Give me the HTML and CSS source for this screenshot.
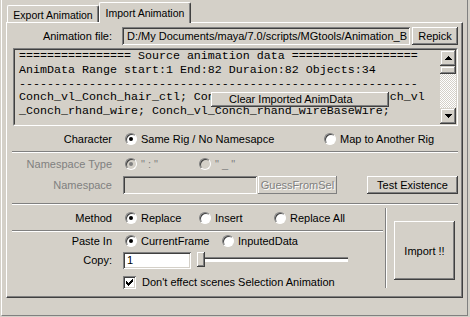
FILE: index.html
```html
<!DOCTYPE html>
<html>
<head>
<meta charset="utf-8">
<link rel="stylesheet" href="styles.css">
</head>
<body>
<div class="frame">
  <div class="tabs">
    <div class="tab">Export Animation</div>
    <div class="tab active">Import Animation</div>
  </div>
  <div class="pane">
    <div class="row r-file">
      <span class="lbl">Animation file:</span>
      <div class="field ro">D:/My Documents/maya/7.0/scripts/MGtools/Animation_B</div>
      <button class="btn repick">Repick</button>
    </div>

    <div class="tarea">
      <div class="tarea-in">
        <div class="tbody">================ Source animation data ==================
AnimData Range start:1 End:82 Duraion:82 Objects:34
---------------------------------------------------------
Conch_vl_Conch_hair_ctl; Conch_vl_Conch_head_ctl; Conch_vl
_Conch_rhand_wire; Conch_vl_Conch_rhand_wireBaseWire;</div>
        <div class="vscroll">
          <div class="sbtn"><svg width="7" height="4" viewBox="0 0 7 4"><path d="M3 0h1v1h1v1h1v1h1v1H0V3h1V2h1V1h1z" fill="#000"/></svg></div>
          <div class="sthumb"></div>
          <div class="strack"></div>
          <div class="sbtn"><svg width="7" height="4" viewBox="0 0 7 4"><path d="M0 0h7v1H6v1H5v1H4v1H3V3H2V2H1V1H0z" fill="#000"/></svg></div>
        </div>
      </div>
      <div class="popup">Clear Imported AnimData</div>
    </div>

    <div class="row r-char">
      <span class="lbl">Character</span>
      <div class="opts">
        <label class="opt w-char"><span class="radio on"></span>Same Rig / No Namesapce</label>
        <label class="opt"><span class="radio"></span>Map to Another Rig</label>
      </div>
    </div>

    <div class="sep"></div>

    <div class="row r-nstype dis">
      <span class="lbl">Namespace Type</span>
      <div class="opts">
        <label class="opt w-ns"><span class="radio on off"></span>&quot; : &quot;</label>
        <label class="opt"><span class="radio off"></span>&quot; _ &quot;</label>
      </div>
    </div>

    <div class="row r-ns">
      <span class="lbl dis">Namespace</span>
      <div class="field ns-field"></div>
      <button class="btn guess">GuessFromSel</button>
      <button class="btn test">Test Existence</button>
    </div>

    <div class="sep"></div>

    <div class="bottom">
      <div class="left">
        <div class="row r-method">
          <span class="lbl">Method</span>
          <div class="opts">
            <label class="opt w-m1"><span class="radio on"></span>Replace</label>
            <label class="opt w-m2"><span class="radio"></span>Insert</label>
            <label class="opt"><span class="radio"></span>Replace All</label>
          </div>
        </div>
        <div class="sep"></div>
        <div class="row r-paste">
          <span class="lbl">Paste In</span>
          <div class="opts">
            <label class="opt w-p1"><span class="radio on"></span>CurrentFrame</label>
            <label class="opt"><span class="radio"></span>InputedData</label>
          </div>
        </div>
        <div class="row r-copy">
          <span class="lbl">Copy:</span>
          <div class="field white copy-field">1</div>
          <div class="slider">
            <div class="groove"></div>
            <div class="knob"></div>
          </div>
        </div>
        <div class="row r-check">
          <span class="check"><svg width="7" height="7" viewBox="0 0 7 7"><path d="M6 0h1v3H6v1H5v1H4v1H3v1H2V6H1V5H0V2h1v1h1v1h1V3h1V2h1V1h1z" fill="#000"/></svg></span>
          <span>Don't effect scenes Selection Animation</span>
        </div>
      </div>
      <div class="vsep"></div>
      <button class="btn import">Import !!</button>
    </div>
  </div>
</div>
</body>
</html>
```

FILE: styles.css
```css
* { box-sizing: border-box; }
html, body { margin: 0; padding: 0; }
body {
  width: 470px;
  height: 317px;
  overflow: hidden;
  background: #d4d0c8;
  font-family: "Liberation Sans", Arial, sans-serif;
  font-size: 11px;
  color: #000;
}

.frame {
  margin-left: 1px;
  width: 467px;
  height: 316px;
  border-left: 1px solid #fff;
  border-right: 1px solid #808080;
  border-bottom: 1px solid #808080;
  padding: 0 4px;
}

/* tabs */
.tabs {
  display: flex;
  height: 22px;
  padding-left: 1px;
  align-items: flex-start;
}
.tab {
  width: 92px;
  height: 17px;
  margin-top: 5px;
  border-top: 1px solid #fff;
  border-left: 1px solid #fff;
  border-right: 1px solid #404040;
  border-radius: 2px 2px 0 0;
  box-shadow: inset -1px 0 #808080;
  display: flex;
  align-items: center;
  justify-content: center;
  padding-top: 1px;
  font-size: 10.5px;
}
.tab.active {
  height: 21px;
  margin-top: 2px;
  position: relative;
  z-index: 1;
  background: #d4d0c8;
  padding-top: 0;
  padding-bottom: 1px;
}

/* pane */
.pane {
  width: 457px;
  height: 276px;
  border-top: 1px solid #fff;
  border-left: 1px solid #fff;
  border-right: 1px solid #404040;
  border-bottom: 1px solid #404040;
  box-shadow: inset -1px -1px #808080;
  padding: 4px 4px 2px 5px;
}

.row {
  display: flex;
  align-items: center;
}
.lbl {
  flex: none;
  width: 100px;
  margin-right: 10px;
  text-align: right;
  white-space: nowrap;
}
.dis, .dis .lbl { color: #808080; }

/* fields & buttons */
.field {
  height: 18px;
  line-height: 18px;
  padding-left: 5px;
  white-space: nowrap;
  overflow: hidden;
  background: #d4d0c8;
  box-shadow: inset 1px 1px #808080, inset -1px -1px #fff, inset 2px 2px #404040, inset -2px -2px #d4d0c8;
}
.field.white { background: #fff; }
.btn {
  display: flex;
  align-items: center;
  justify-content: center;
  padding: 0;
  margin: 0;
  border: none;
  background: #d4d0c8;
  font-family: "Liberation Sans", Arial, sans-serif;
  font-size: 11px;
  color: #000;
  box-shadow: inset -1px -1px #404040, inset 1px 1px #fff, inset -2px -2px #808080, inset 2px 2px #d4d0c8;
}

.r-file { height: 18px; }
.r-file .field { width: 288px; }
.repick { width: 46px; height: 18px; margin-left: 2px; }

/* text area */
.tarea {
  position: relative;
  margin: 3px 0 0 1px;
  width: 445px;
  height: 78px;
  border: 1px solid;
  border-color: #808080 #fff #fff #808080;
}
.tarea-in {
  display: flex;
  height: 100%;
  border: 1px solid;
  border-color: #404040 #d4d0c8 #d4d0c8 #404040;
}
.tbody {
  flex: 1;
  overflow: hidden;
  padding-left: 4px;
  font-family: "Liberation Mono", "Courier New", monospace;
  font-size: 11.666px;
  line-height: 13.75px;
  white-space: pre;
}
.vscroll {
  flex: none;
  width: 16px;
  display: flex;
  flex-direction: column;
}
.sbtn {
  height: 16px;
  display: flex;
  align-items: center;
  justify-content: center;
  background: #d4d0c8;
  box-shadow: inset -1px -1px #404040, inset 1px 1px #d4d0c8, inset -2px -2px #808080, inset 2px 2px #fff;
}
.sbtn svg { display: block; }
.sthumb {
  height: 8px;
  background: #d4d0c8;
  box-shadow: inset -1px -1px #404040, inset 1px 1px #d4d0c8, inset -2px -2px #808080, inset 2px 2px #fff;
}
.strack {
  flex: 1;
  background: repeating-conic-gradient(#fff 0 25%, #d4d0c8 0 50%) 0 0 / 2px 2px;
}
.popup {
  position: absolute;
  left: 197px;
  top: 43px;
  width: 178px;
  height: 15px;
  padding-left: 18px;
  line-height: 15px;
  background: #d4d0c8;
  box-shadow: inset -1px -1px #404040, inset 1px 1px #fff, inset -2px -2px #808080;
  white-space: nowrap;
}

/* radios */
.opts { display: flex; margin-left: 3px; }
.opt {
  display: flex;
  align-items: center;
  gap: 4px;
  white-space: nowrap;
}
.w-char { width: 199px; }
.w-ns { width: 74px; }
.w-m1 { width: 74px; }
.w-m2 { width: 75px; }
.w-p1 { width: 97px; }
.radio {
  position: relative;
  flex: none;
  width: 12px;
  height: 12px;
  border-radius: 50%;
  border: 1px solid;
  border-color: #808080 #fff #fff #808080;
  background: #fff;
  box-shadow: inset 1px 1px #404040;
}
.radio.on::after {
  content: "";
  position: absolute;
  left: 3px;
  top: 3px;
  width: 4px;
  height: 4px;
  border-radius: 50%;
  background: #000;
}
.radio.off { background: #d4d0c8; }
.radio.off.on::after { background: #808080; }

.sep {
  height: 2px;
  border-top: 1px solid #808080;
  border-bottom: 1px solid #fff;
}

.r-char { height: 25px; }
.r-nstype { height: 22px; }
.r-ns { height: 20px; margin-bottom: 8px; }
.ns-field { width: 134px; margin-left: 1px; }
.guess {
  width: 79px;
  height: 18px;
  margin-left: 1px;
  color: #808080;
  text-shadow: 1px 1px #fff;
  box-shadow: inset -1px -1px #808080, inset 1px 1px #fff;
}
.test { width: 91px; height: 18px; margin-left: auto; }

/* bottom */
.bottom { display: flex; height: 90px; }
.left { width: 371px; flex: none; }
.r-method { height: 25px; }
.r-paste { height: 18px; }
.r-copy { height: 20px; }
.copy-field { width: 68px; height: 17px; line-height: 17px; margin-left: 1px; padding-left: 4px; }
.slider {
  position: relative;
  margin-left: 6px;
  width: 151px;
  height: 16px;
}
.groove {
  margin-top: 5px;
  height: 5px;
  border-top: 1px solid #808080;
  border-bottom: 1px solid #fff;
  box-shadow: inset 0 1px #404040, inset 0 -3px #fff;
}
.knob {
  position: absolute;
  left: 0;
  top: 0;
  width: 8px;
  height: 15px;
  background: #d4d0c8;
  box-shadow: inset -1px -1px #404040, inset 1px 1px #fff, inset -2px -2px #808080;
}
.r-check { height: 20px; margin-top: 2px; padding-left: 111px; gap: 6px; }
.check {
  flex: none;
  width: 13px;
  height: 13px;
  display: flex;
  align-items: center;
  justify-content: center;
  background: #fff;
  box-shadow: inset 1px 1px #808080, inset -1px -1px #fff, inset 2px 2px #404040, inset -2px -2px #d4d0c8;
}
.check svg { display: block; }
.vsep {
  flex: none;
  margin: 3px 0 0 2px;
  width: 2px;
  height: 80px;
  border-left: 1px solid #808080;
  border-right: 1px solid #fff;
}
.import { width: 61px; height: 59px; margin: 16px 0 0 7px; }
```
